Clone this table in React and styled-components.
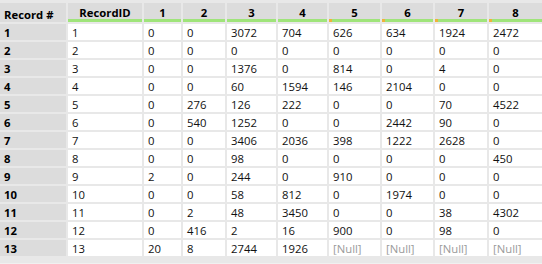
import React from "react";
import styled, { createGlobalStyle, css } from "styled-components";

const Global = createGlobalStyle`
  html, body { margin: 0; padding: 0; background: #f0f0f0; }
  body { font-family: "Open Sans", "Noto Sans", sans-serif; }
`;

const widths = [66, 74, 37, 42, 49, 49, 51, 51, 52, 53];

const Grid = styled.div`
  display: grid;
  grid-template-columns: ${widths.map((w) => w + "px").join(" ")};
  grid-auto-rows: 16px;
  grid-template-rows: 19px;
  gap: 2px;
  padding-top: 3px;
  background: #e8e8e8;
  width: 542px;
  height: 264px;
  box-sizing: border-box;
  font-size: 11.3px;
  align-content: start;
  border-top: 1px solid #fafafa;
  margin-top: -1px;
`;

const HeadCell = styled.div`
  position: relative;
  background: #dcdcdc;
  font-weight: 700;
  color: #000;
  display: flex;
  align-items: center;
  justify-content: ${(p) => (p.$left ? "flex-start" : "center")};
  padding: ${(p) => (p.$left ? "3px 4px 0" : "3px 0 0")};
  box-sizing: border-box;
  ${(p) =>
    p.$bar &&
    css`
      border-bottom: 3px solid #9fe47a;
    `}
  ${(p) =>
    p.$flag &&
    css`
      &::after {
        content: "";
        position: absolute;
        left: 0;
        bottom: -3px;
        width: 3px;
        height: 3px;
        background: #efb23a;
      }
    `}
`;

const RowHead = styled.div`
  background: #dcdcdc;
  font-weight: 700;
  color: #000;
  display: flex;
  align-items: center;
  padding-left: 4px;
`;

const Cell = styled.div`
  background: #fff;
  color: ${(p) => (p.$null ? "#9a9a9a" : "#111")};
  display: flex;
  align-items: center;
  padding-left: 4px;
  white-space: nowrap;
  overflow: hidden;
`;

const headers = ["RecordID", "1", "2", "3", "4", "5", "6", "7", "8"];
const N = "[Null]";
const rows = [
  [1, 0, 0, 3072, 704, 626, 634, 1924, 2472],
  [2, 0, 0, 0, 0, 0, 0, 0, 0],
  [3, 0, 0, 1376, 0, 814, 0, 4, 0],
  [4, 0, 0, 60, 1594, 146, 2104, 0, 0],
  [5, 0, 276, 126, 222, 0, 0, 70, 4522],
  [6, 0, 540, 1252, 0, 0, 2442, 90, 0],
  [7, 0, 0, 3406, 2036, 398, 1222, 2628, 0],
  [8, 0, 0, 98, 0, 0, 0, 0, 450],
  [9, 2, 0, 244, 0, 910, 0, 0, 0],
  [10, 0, 0, 58, 812, 0, 1974, 0, 0],
  [11, 0, 2, 48, 3450, 0, 0, 38, 4302],
  [12, 0, 416, 2, 16, 900, 0, 98, 0],
  [13, 20, 8, 2744, 1926, N, N, N, N],
];

export default function App() {
  return (
    <>
      <Global />
      <Grid>
        <HeadCell $left>Record #</HeadCell>
        {headers.map((h, i) => (
          <HeadCell key={h} $bar $flag={i >= 5}>
            {h}
          </HeadCell>
        ))}
        {rows.map((r, ri) => (
          <React.Fragment key={ri}>
            <RowHead>{ri + 1}</RowHead>
            {r.map((v, ci) => (
              <Cell key={ci} $null={v === N}>
                {v}
              </Cell>
            ))}
          </React.Fragment>
        ))}
      </Grid>
    </>
  );
}
